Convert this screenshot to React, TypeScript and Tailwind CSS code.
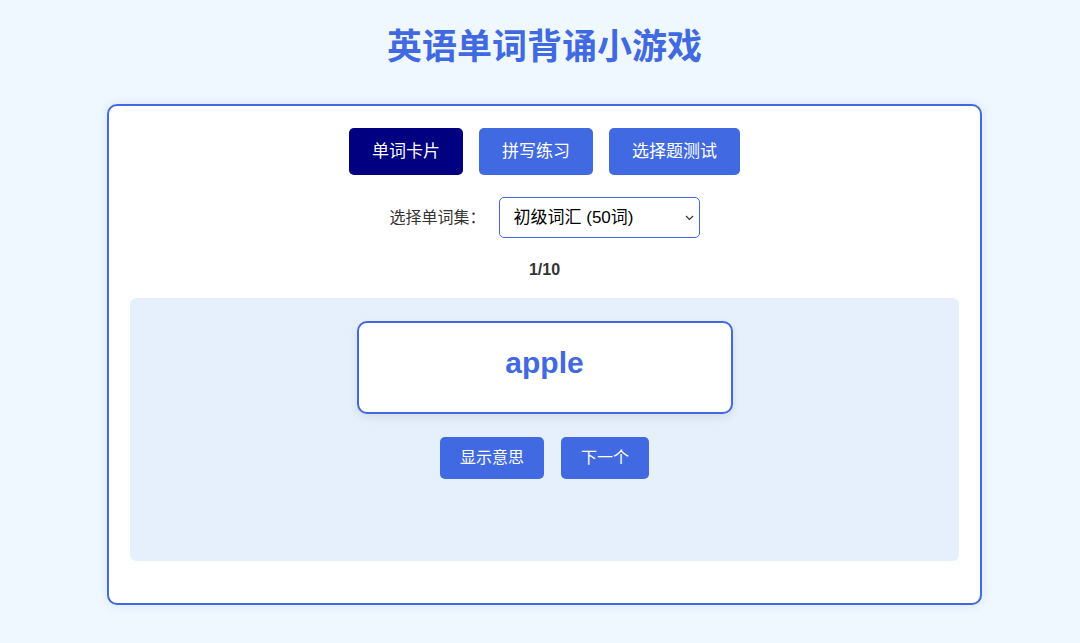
import { useState } from 'react'

const words = [
  { en: 'apple', zh: '苹果' },
  { en: 'book', zh: '书' },
  { en: 'cat', zh: '猫' },
  { en: 'dog', zh: '狗' },
  { en: 'egg', zh: '鸡蛋' },
  { en: 'fish', zh: '鱼' },
  { en: 'girl', zh: '女孩' },
  { en: 'house', zh: '房子' },
  { en: 'ice', zh: '冰' },
  { en: 'juice', zh: '果汁' },
]

const modes = ['单词卡片', '拼写练习', '选择题测试']

export default function App() {
  const [mode, setMode] = useState(0)
  const [idx, setIdx] = useState(0)
  const [show, setShow] = useState(false)
  const w = words[idx]

  return (
    <div className="min-h-[643px] bg-[#f0f8ff] pl-[9px] pt-[26px] text-[#333]" style={{ fontFamily: '"Liberation Sans", "Noto Sans CJK SC", sans-serif' }}>
      <h1 className="text-center text-[35px] leading-[42px] font-bold text-[#4169e1]">英语单词背诵小游戏</h1>

      <div className="mx-auto mt-[36px] w-[875px] h-[501px] rounded-[10px] border-2 border-[#4169e1] bg-white px-[21px] pt-[22px] shadow-[0_0_12px_rgba(65,105,225,0.15)]">
        <div className="flex justify-center gap-4">
          {modes.map((m, i) => (
            <button key={m} onClick={() => setMode(i)}
              className={`h-[47px] rounded-[5px] px-[23px] text-[17px] text-white ${mode === i ? 'bg-[#000080]' : 'bg-[#4169e1]'}`}>
              {m}
            </button>
          ))}
        </div>

        <div className="mt-[22px] flex items-center justify-center gap-[13px] text-[16px]">
          <span className="text-[#333]">选择单词集：</span>
          <div className="relative">
            <select className="h-[41px] w-[201px] appearance-none rounded-[5px] border border-[#4169e1] bg-white pl-[14px] text-[17px] text-black outline-none">
              <option>初级词汇 (50词)</option>
              <option>中级词汇 (100词)</option>
              <option>高级词汇 (200词)</option>
            </select>
            <svg className="pointer-events-none absolute right-[6px] top-[18px]" width="9" height="6" viewBox="0 0 9 6">
              <path d="M1 1l3.5 3.5L8 1" fill="none" stroke="#333" strokeWidth="1.2" />
            </svg>
          </div>
        </div>

        <div className="mt-[20px] text-center text-[16px] font-bold text-[#333]">{idx + 1}/{words.length}</div>

        <div className="mt-[16px] h-[263px] rounded-[6px] bg-[#e6f0fc] pt-[23px]">
          <div className="mx-auto flex h-[93px] w-[376px] items-center justify-center rounded-[10px] border-2 border-[#4169e1] bg-white pb-[10px] shadow-[0_4px_10px_rgba(0,0,0,0.08)]">
            <div className="text-center">
              <div className="text-[30px] leading-[36px] font-bold text-[#4169e1]">{w.en}</div>
              {show && <div className="text-[16px] text-[#555]">{w.zh}</div>}
            </div>
          </div>
          <div className="mt-[23px] flex justify-center gap-[17px]">
            <button onClick={() => setShow(!show)} className="h-[42px] rounded-[5px] bg-[#4169e1] px-[20px] text-[16px] text-white">显示意思</button>
            <button onClick={() => { setIdx((idx + 1) % words.length); setShow(false) }} className="h-[42px] rounded-[5px] bg-[#4169e1] px-[20px] text-[16px] text-white">下一个</button>
          </div>
        </div>
      </div>
    </div>
  )
}
